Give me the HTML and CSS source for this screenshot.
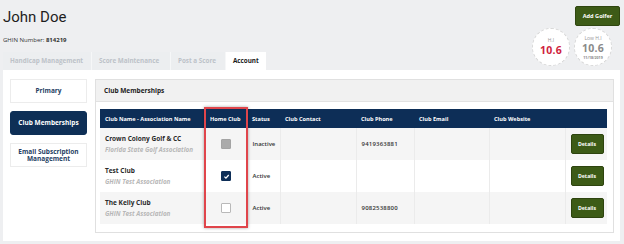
FILE: index.html
```html
<!DOCTYPE html>
<html lang="en">
<head>
  <meta charset="UTF-8">
  <title>Golfer Account</title>
  <link rel="stylesheet" href="styles.css">
</head>
<body>
  <div class="page">
    <div class="head">
      <div class="who">
        <h1>John Doe</h1>
        <p class="ghin">GHIN Number: <b>814219</b></p>
        <nav class="tabs">
          <a class="tab">Handicap Management</a>
          <a class="tab">Score Maintenance</a>
          <a class="tab">Post a Score</a>
          <a class="tab active">Account</a>
        </nav>
      </div>
      <div class="side-head">
        <button class="add-golfer">Add Golfer</button>
        <div class="stats">
          <div class="stat">
            <span class="stat-label">H.I</span>
            <span class="stat-value red">10.6</span>
          </div>
          <div class="stat">
            <span class="stat-label">Low H.I</span>
            <span class="stat-value">10.6</span>
            <span class="stat-date">11/18/2019</span>
          </div>
        </div>
      </div>
    </div>

    <div class="content">
      <aside class="menu">
        <a class="menu-item">Primary</a>
        <a class="menu-item current">Club Memberships</a>
        <a class="menu-item">Email Subscription Management</a>
      </aside>

      <section class="panel">
        <div class="panel-title">Club Memberships</div>
        <div class="panel-body">
          <div class="table-wrap">
            <table class="clubs">
              <colgroup>
                <col style="width:105px"><col style="width:42px"><col style="width:33px"><col style="width:76px">
                <col style="width:58px"><col style="width:75px"><col style="width:76px"><col style="width:42px">
              </colgroup>
              <thead>
                <tr>
                  <th>Club Name - Association Name</th>
                  <th>Home Club</th>
                  <th>Status</th>
                  <th>Club Contact</th>
                  <th>Club Phone</th>
                  <th>Club Email</th>
                  <th>Club Website</th>
                  <th></th>
                </tr>
              </thead>
              <tbody>
                <tr>
                  <td><div class="club">Crown Colony Golf &amp; CC</div><div class="assoc">Florida State Golf Association</div></td>
                  <td class="center"><span class="check disabled"></span></td>
                  <td class="status">Inactive</td>
                  <td></td>
                  <td class="phone">9419363881</td>
                  <td></td>
                  <td></td>
                  <td><button class="details">Details</button></td>
                </tr>
                <tr>
                  <td><div class="club">Test Club</div><div class="assoc">GHIN Test Association</div></td>
                  <td class="center"><span class="check checked"><svg viewBox="0 0 10 10" width="7" height="7"><path d="M2 5.2 L4.2 7.3 L8.2 2.8" fill="none" stroke="#fff" stroke-width="1.8"/></svg></span></td>
                  <td class="status">Active</td>
                  <td></td>
                  <td class="phone"></td>
                  <td></td>
                  <td></td>
                  <td><button class="details">Details</button></td>
                </tr>
                <tr>
                  <td><div class="club">The Kelly Club</div><div class="assoc">GHIN Test Association</div></td>
                  <td class="center"><span class="check"></span></td>
                  <td class="status">Active</td>
                  <td></td>
                  <td class="phone">9082538800</td>
                  <td></td>
                  <td></td>
                  <td><button class="details">Details</button></td>
                </tr>
              </tbody>
            </table>
            <div class="highlight"></div>
          </div>
        </div>
      </section>
    </div>
  </div>
</body>
</html>
```

FILE: styles.css
```css
body {
  margin: 0;
  background-color: #eeeff1;
  font-family: "Open Sans", "Noto Sans", sans-serif;
  color: #222;
}

.page {
  padding: 0 4px 0 3px;
}

.head {
  display: flex;
  justify-content: space-between;
}

h1 {
  margin: 8px 0 0 0;
  font-family: Roboto, sans-serif;
  font-weight: 400;
  font-size: 15px;
  line-height: 18px;
  color: #1e1e1e;
}

.ghin {
  margin: 10px 0 0 0;
  font-size: 6px;
  line-height: 8px;
  color: #333;
}

.ghin b {
  font-weight: 700;
}

.tabs {
  display: flex;
  margin-top: 8px;
}

.tab {
  height: 18px;
  line-height: 18px;
  font-size: 6.3px;
  font-weight: 700;
  color: #bcc2c8;
  padding: 0 7px;
  background: #eceef0;
  border-right: 1px solid #f6f7f8;
}

.tab:nth-child(1) { width: 74px; }
.tab:nth-child(2) { width: 64px; }
.tab:nth-child(3) { width: 40px; }

.tab.active {
  background: #fff;
  color: #1a1a1a;
  border-right: none;
  width: 26px;
}

.side-head {
  display: flex;
  flex-direction: column;
  align-items: flex-end;
  justify-content: space-between;
}

.add-golfer {
  margin-top: 6px;
  width: 45px;
  height: 20px;
  padding: 0;
  background-color: #3d5b17;
  border: 1px solid #2f4610;
  border-radius: 2px;
  color: #fff;
  font-family: "Open Sans", sans-serif;
  font-size: 5.6px;
  font-weight: 700;
}

.stats {
  display: flex;
  gap: 4px;
  margin-bottom: 4px;
  margin-right: 8px;
}

.stat {
  width: 36px;
  height: 36px;
  border-radius: 50%;
  border: 1px dashed #d8d8d8;
  background: #fff;
  display: flex;
  flex-direction: column;
  align-items: center;
  justify-content: center;
}

.stat-label {
  font-size: 5px;
  line-height: 7px;
  color: #999;
}

.stat-value {
  font-size: 10.5px;
  line-height: 13px;
  font-weight: 700;
  color: #8a8a8a;
  letter-spacing: 0.2px;
}

.stat-value.red {
  color: #cf1f3e;
}

.stat-date {
  font-size: 3.6px;
  line-height: 5px;
  font-weight: 700;
  color: #888;
}

.content {
  display: flex;
  gap: 8px;
  background: #fff;
  padding: 9px 6px 8px 7px;
}

.menu {
  width: 77px;
  display: flex;
  flex-direction: column;
  gap: 8px;
}

.menu-item {
  height: 22px;
  display: flex;
  align-items: center;
  justify-content: center;
  text-align: center;
  border: 1px solid #ececec;
  font-size: 6.5px;
  line-height: 7.5px;
  font-weight: 700;
  color: #253e63;
  padding: 0 4px;
}

.menu-item.current {
  background: #0e2f56;
  border-color: #0e2f56;
  border-radius: 3px;
  color: #fff;
}

.panel {
  flex: 1;
  border: 1px solid #e0e0e0;
}

.panel-title {
  height: 21px;
  line-height: 21px;
  background: #f1f1f1;
  border-bottom: 1px solid #e2e2e2;
  padding-left: 8px;
  font-size: 6.5px;
  font-weight: 700;
  color: #222;
}

.panel-body {
  padding: 7px 4px 8px 4px;
}

.table-wrap {
  position: relative;
  width: 507px;
}

.clubs {
  width: 507px;
  table-layout: fixed;
  border-collapse: collapse;
}

.clubs th {
  height: 19px;
  padding: 0 0 0 5px;
  background: #0d2e57;
  color: #fff;
  font-size: 5.6px;
  font-weight: 700;
  text-align: left;
  white-space: nowrap;
}

.clubs td {
  height: 32px;
  padding: 0 0 0 5px;
  border-left: 1px solid #ebebeb;
  font-size: 6px;
  font-weight: 600;
  color: #333;
  vertical-align: middle;
}

.clubs td:first-child {
  border-left: none;
}

.clubs tbody tr:nth-child(odd) td {
  background: #f5f5f5;
}

.club {
  font-size: 6.5px;
  font-weight: 700;
  color: #2a2a2a;
  line-height: 9px;
}

.assoc {
  margin-top: 3px;
  font-size: 6.3px;
  font-style: italic;
  font-weight: 700;
  color: #b7b7b7;
  line-height: 8px;
}

.clubs td.center {
  text-align: center;
  padding: 0;
}

.check {
  display: inline-flex;
  align-items: center;
  justify-content: center;
  width: 8px;
  height: 8px;
  border: 1px solid #b9b9b9;
  border-radius: 1px;
  background: #fff;
  vertical-align: middle;
}

.check.disabled {
  background: #ababab;
  border-color: #a4a4a4;
}

.check.checked {
  background: #0d2e57;
  border-color: #0d2e57;
}

.phone {
  letter-spacing: 0.2px;
}

.details {
  display: block;
  width: 33px;
  height: 20px;
  padding: 0;
  background: #3d5b17;
  border: 1px solid #2e440f;
  border-radius: 2px;
  color: #fff;
  font-family: "Open Sans", sans-serif;
  font-size: 5.2px;
  font-weight: 700;
}

.highlight {
  position: absolute;
  left: 104px;
  top: -2px;
  width: 40px;
  height: 117px;
  border: 2px solid #e0454b;
  box-shadow: 0 0 3px rgba(0, 0, 0, 0.35);
  pointer-events: none;
}
```
